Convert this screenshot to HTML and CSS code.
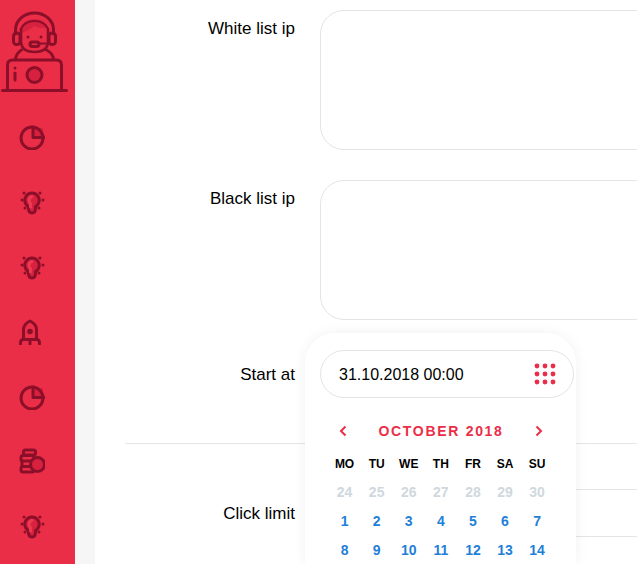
FILE: index.html
```html
<!DOCTYPE html>
<html lang="en">

<head>
  <meta charset="UTF-8" />
  <title>Campaign settings</title>
  <link rel="stylesheet" href="styles.css">
</head>

<body>
  <svg class="defs" width="0" height="0">
    <symbol id="icon-pie" viewBox="0 0 26 26">
      <path d="M15 4h9v10h-9z" class="tint" />
      <circle cx="13" cy="14" r="11" class="stroke" />
      <path d="M14 3v10.500h11" class="stroke" />
    </symbol>
    <symbol id="icon-bulb" viewBox="0 0 26 26">
      <circle cx="5" cy="4" r="1.500" class="dot" />
      <circle cx="21" cy="4" r="1.500" class="dot" />
      <circle cx="3" cy="11" r="1.500" class="dot" />
      <circle cx="24" cy="11" r="1.500" class="dot" />
      <circle cx="6" cy="19" r="1.500" class="dot" />
      <circle cx="20" cy="19" r="1.500" class="dot" />
      <path d="M9.500 19v-1.500a7.200 7.200 0 1 1 7 0v1.500q0 5-3.500 5t-3.500-5z" class="bulb" />
      <path d="M11.500 18v-3.500a4 4 0 0 1-1.500-3.500q.5-3 3-3.500" class="bulb-light" />
    </symbol>
    <symbol id="icon-rocket" viewBox="0 0 26 26">
      <path d="M4.500 20v-9q0-6 6.500-9 6.500 3 6.500 9v9" class="stroke" />
      <circle cx="11" cy="12.500" r="2.800" class="dot" />
      <path d="M1.500 25v-1q0-3.500 3-3.500h13q3 0 3 3.500v1M11 20.500v4.500" class="stroke" />
    </symbol>
    <symbol id="icon-coins" viewBox="0 0 26 26">
      <rect x="4.500" y="2" width="12" height="5" rx="2" class="stroke" />
      <rect x="2" y="7.500" width="13" height="5.500" rx="2" class="stroke" />
      <rect x="2" y="18.500" width="13" height="5.500" rx="2" class="stroke" />
      <path d="M3 13v5.500" class="stroke" />
      <circle cx="18.500" cy="16.500" r="7" class="tint-stroke" />
    </symbol>
  </svg>

  <div class="app">
    <aside class="sidebar">
      <svg class="logo" width="75" height="105" viewBox="0 0 75 105">
        <path d="M15.500 34v-4a19 17 0 0 1 38 0v4" class="stroke" />
        <path d="M21 33v-6q3-8 14-8 10 0 13 9-9 1-14-2-5 5-13 7z" class="tint" />
        <path d="M21 29a14 11 0 0 1 27 0" class="stroke-thin" />
        <rect x="13.500" y="33" width="6.500" height="11.500" rx="3" class="stroke" />
        <rect x="49" y="33" width="6.500" height="11.500" rx="3" class="stroke" />
        <path d="M21 29v12q0 11 13.500 11t13.500-11v-12" class="stroke-face" />
        <circle cx="28" cy="37" r="1.500" class="dot" />
        <circle cx="41" cy="37" r="1.500" class="dot" />
        <rect x="30" y="42" width="9" height="4.500" rx="2.200" class="mouth" />
        <path d="M38 43.500h8" class="stroke-thin" />
        <path d="M15.500 59q1-6 6-9M53.500 59q-1-6-7-9" class="stroke" />
        <path d="M7.500 90v-25q0-5 5-5h44q5 0 5 5v25" class="stroke" />
        <path d="M2.500 90.500h64" class="stroke" />
        <circle cx="34.500" cy="75" r="7.500" class="tint-stroke" />
        <circle cx="15" cy="68" r="1.500" class="dot" />
        <path d="M15 73v7" class="stroke" />
      </svg>
      <nav class="side-nav">
        <a class="side-link"><svg><use href="#icon-pie" /></svg></a>
        <a class="side-link"><svg><use href="#icon-bulb" /></svg></a>
        <a class="side-link"><svg><use href="#icon-bulb" /></svg></a>
        <a class="side-link"><svg><use href="#icon-rocket" /></svg></a>
        <a class="side-link"><svg><use href="#icon-pie" /></svg></a>
        <a class="side-link"><svg><use href="#icon-coins" /></svg></a>
        <a class="side-link"><svg><use href="#icon-bulb" /></svg></a>
      </nav>
    </aside>

    <main class="content">
      <form class="form">
        <div class="form-row">
          <label class="form-label label-top">White list ip</label>
          <div class="form-box text-area"></div>
        </div>
        <div class="form-row">
          <label class="form-label label-top">Black list ip</label>
          <div class="form-box text-area"></div>
        </div>
        <div class="form-row row-date">
          <label class="form-label">Start at</label>
          <div class="date-field">
            <div class="date-popup">
              <div class="form-box date-input">
                <span>31.10.2018 00:00</span>
                <svg width="22" height="22" viewBox="0 0 22 22" class="date-icon">
                  <circle cx="3" cy="3" r="2.400" />
                  <circle cx="11" cy="3" r="2.400" />
                  <circle cx="19" cy="3" r="2.400" />
                  <circle cx="3" cy="11" r="2.400" />
                  <circle cx="11" cy="11" r="2.400" />
                  <circle cx="19" cy="11" r="2.400" />
                  <circle cx="3" cy="19" r="2.400" />
                  <circle cx="11" cy="19" r="2.400" />
                  <circle cx="19" cy="19" r="2.400" />
                </svg>
              </div>
              <div class="cal-head">
                <svg width="10" height="12" viewBox="0 0 10 12" class="cal-arrow"><path d="M7.500 1.500 3 6l4.500 4.500" /></svg>
                <span class="cal-title">OCTOBER 2018</span>
                <svg width="10" height="12" viewBox="0 0 10 12" class="cal-arrow"><path d="M2.500 1.500 7 6l-4.500 4.500" /></svg>
              </div>
              <div class="cal-grid">
                <span class="cal-day-name">MO</span>
                <span class="cal-day-name">TU</span>
                <span class="cal-day-name">WE</span>
                <span class="cal-day-name">TH</span>
                <span class="cal-day-name">FR</span>
                <span class="cal-day-name">SA</span>
                <span class="cal-day-name">SU</span>
                <span class="cal-day old">24</span>
                <span class="cal-day old">25</span>
                <span class="cal-day old">26</span>
                <span class="cal-day old">27</span>
                <span class="cal-day old">28</span>
                <span class="cal-day old">29</span>
                <span class="cal-day old">30</span>
                <span class="cal-day">1</span>
                <span class="cal-day">2</span>
                <span class="cal-day">3</span>
                <span class="cal-day">4</span>
                <span class="cal-day">5</span>
                <span class="cal-day">6</span>
                <span class="cal-day">7</span>
                <span class="cal-day">8</span>
                <span class="cal-day">9</span>
                <span class="cal-day">10</span>
                <span class="cal-day">11</span>
                <span class="cal-day">12</span>
                <span class="cal-day">13</span>
                <span class="cal-day">14</span>
              </div>
            </div>
          </div>
        </div>
        <hr class="divider">
        <div class="form-row">
          <label class="form-label">Click limit</label>
          <div class="form-box limit-input"></div>
        </div>
      </form>
    </main>
  </div>
</body>

</html>
```

FILE: styles.css
```css
html,
body {
  margin: 0;
  height: 100%;
  overflow: hidden;
}

body {
  font-family: "Liberation Sans", Arial, sans-serif;
  font-size: 16px;
  color: #000;
  background: #f6f6f6;
}

.defs {
  position: absolute;
}

.stroke,
.stroke-thin,
.stroke-face,
.bulb,
.bulb-light,
.tint-stroke,
.mouth {
  fill: none;
  stroke: #8c0f29;
  stroke-width: 3;
  stroke-linecap: round;
  stroke-linejoin: round;
}

.stroke-thin {
  stroke-width: 2;
}

.stroke-face {
  stroke-width: 2.6;
}

.dot {
  fill: #8c0f29;
}

.tint {
  fill: #d8213f;
}

.tint-stroke {
  fill: #d8213f;
}

.bulb {
  fill: #d8213f;
}

.bulb-light {
  stroke: #ec3a50;
  stroke-width: 3;
}

.app {
  display: flex;
  height: 100%;
}

.sidebar {
  flex: 0 0 75px;
  background: #eb2e48;
}

.logo {
  display: block;
}

.side-nav {
  display: flex;
  flex-direction: column;
}

.side-link {
  display: flex;
  align-items: center;
  height: 64.8px;
  padding-left: 19px;
}

.side-link svg {
  width: 26px;
  height: 26px;
}

.content {
  flex: 1;
  min-width: 0;
  margin-left: 20px;
  background: #fff;
  overflow: hidden;
}

.form {
  display: flex;
  flex-direction: column;
  gap: 30px;
  padding: 10px 0 0 30px;
}

.form-row {
  display: flex;
  gap: 25px;
}

.form-label {
  flex: 0 0 170px;
  padding-top: 1px;
  font-size: 17px;
  text-align: right;
  line-height: 48px;
}

.label-top {
  line-height: 36px;
}

.form-box {
  box-sizing: border-box;
  flex: 0 0 400px;
  border: 1px solid #e4e4e4;
  background: #fff;
}

.text-area {
  height: 140px;
  border-radius: 24px;
}

.limit-input {
  height: 48px;
  border-radius: 24px;
}

.row-date {
  height: 48px;
}

.date-field {
  position: relative;
  flex: 0 0 254px;
  z-index: 2;
}

.date-popup {
  position: absolute;
  top: -17px;
  left: -15px;
  width: 271px;
  box-sizing: border-box;
  padding: 17px 2px 0 15px;
  background: #fff;
  border-radius: 30px 30px 0 0;
  box-shadow: 0 0 14px rgba(0, 0, 0, 0.06);
}

.date-input {
  display: flex;
  align-items: center;
  justify-content: space-between;
  width: 254px;
  height: 48px;
  padding: 2px 17px 0 18px;
  border-radius: 24px;
}

.date-icon {
  margin-top: -2px;
  fill: #eb2e48;
}

.cal-head {
  display: flex;
  align-items: center;
  justify-content: space-between;
  width: 206px;
  margin: 25px 0 0 18px;
}

.cal-title {
  font-size: 14px;
  font-weight: bold;
  letter-spacing: 1.7px;
  color: #eb2e48;
}

.cal-arrow {
  fill: none;
  stroke: #eb2e48;
  stroke-width: 2;
}

.cal-grid {
  display: grid;
  grid-template-columns: repeat(7, 32.1px);
  grid-auto-rows: 29px;
  margin: 9px 0 0 8.5px;
  text-align: center;
  align-items: center;
}

.cal-day-name {
  padding-top: 2px;
  font-size: 12px;
  font-weight: bold;
}

.cal-day {
  font-size: 14px;
  font-weight: bold;
  color: #1f80d8;
}

.cal-day.old {
  color: #cfd8de;
}

.divider {
  width: 512px;
  margin: 15px 0 15px;
  border: 0;
  border-top: 1px solid #e6e6e6;
}
```
